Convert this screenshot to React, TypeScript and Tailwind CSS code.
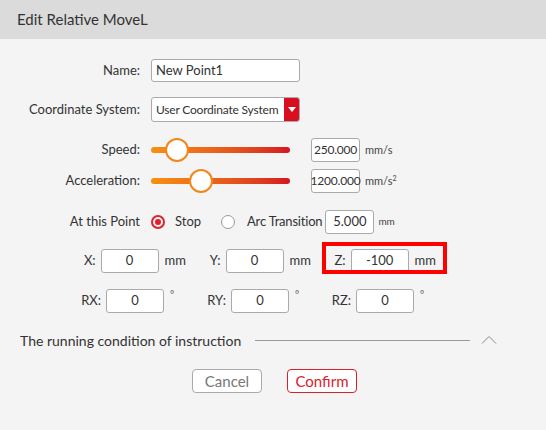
import React from "react";

const font = { fontFamily: "Lato, 'Noto Sans', sans-serif" };

function Label({ children }: { children: React.ReactNode }) {
  return <div className="w-[140px] shrink-0 text-right text-[13px] text-[#333]">{children}</div>;
}

function Slider({ pos }: { pos: number }) {
  return (
    <div className="relative ml-[11px] h-[24px] w-[139px] flex items-center">
      <div className="h-[6px] w-full rounded-full bg-gradient-to-r from-[#f7900f] to-[#d6121f]" />
      <div
        className="absolute top-0 h-[24px] w-[24px] rounded-full border-2 border-[#f3861a] bg-white"
        style={{ left: pos - 12 }}
      />
    </div>
  );
}

function NumBox({ value, w = "w-[49px]", big }: { value: string; w?: string; big?: boolean }) {
  return (
    <div
      className={`${w} h-[24px] shrink-0 flex items-center justify-center rounded-[3px] border border-[#aaaaaa] bg-white ${
        big ? "text-[13px]" : "text-[12px] tracking-[-0.2px]"
      } text-[#333] whitespace-nowrap`}
    >
      {value}
    </div>
  );
}

function Axis({ label, value, unit, deg }: { label: string; value: string; unit: string; deg?: boolean }) {
  return (
    <div className="w-[125px] shrink-0 flex items-center">
      <div className="w-[40px] text-right text-[13px] text-[#333]">{label}</div>
      <div className="ml-[5px]">
        <NumBox value={value} w="w-[58px]" big />
      </div>
      {deg ? (
        <span className="ml-[6px] self-start -mt-[2px] text-[10px] text-[#555]">°</span>
      ) : (
        <span className="ml-[6px] text-[13px] text-[#333]">{unit}</span>
      )}
    </div>
  );
}

export default function App() {
  return (
    <div className="w-[546px] h-[430px] bg-[#f4f4f4] relative overflow-hidden" style={font}>
      <div className="h-[39px] bg-[#dbdbdb] flex items-center pl-[17px] text-[15px] text-[#333]">
        Edit Relative MoveL
      </div>

      <div className="flex flex-col">
        <div className="mt-[20px] flex items-center h-[23px]">
          <Label>Name:</Label>
          <div className="ml-[11px] w-[149px] h-[23px] flex items-center rounded-[3px] border border-[#aaaaaa] bg-white pl-[4px] text-[13px] text-[#333]">
            New Point1
          </div>
        </div>

        <div className="mt-[15px] flex items-center h-[25px]">
          <Label>Coordinate System:</Label>
          <div className="ml-[11px] w-[149px] h-[25px] flex items-center rounded-[3px] border border-[#aaaaaa] bg-white text-[12px] text-[#333] overflow-hidden">
            <span className="flex-1 pl-[4px] whitespace-nowrap tracking-[-0.2px]">User Coordinate System</span>
            <div className="w-[15px] h-full shrink-0 bg-[#d90f1f] flex items-center justify-center">
              <svg width="8" height="6" viewBox="0 0 8 6">
                <path d="M0 0 L8 0 L4 5 Z" fill="#fff" />
              </svg>
            </div>
          </div>
        </div>

        <div className="mt-[16px] flex items-center h-[24px]">
          <Label>Speed:</Label>
          <Slider pos={26} />
          <div className="ml-[21px]">
            <NumBox value="250.000" />
          </div>
          <span className="ml-[5px] text-[11px] text-[#444]">mm/s</span>
        </div>

        <div className="mt-[7px] flex items-center h-[24px]">
          <Label>Acceleration:</Label>
          <Slider pos={50} />
          <div className="ml-[21px]">
            <NumBox value="1200.000" />
          </div>
          <span className="ml-[5px] text-[11px] text-[#444]">
            mm/s<sup className="text-[7px]">2</sup>
          </span>
        </div>

        <div className="mt-[16px] flex items-center h-[25px]">
          <Label>At this Point</Label>
          <div className="ml-[11px] w-[14px] h-[14px] rounded-full border-2 border-[#e0202c] flex items-center justify-center">
            <div className="w-[6px] h-[6px] rounded-full bg-[#e0202c]" />
          </div>
          <span className="ml-[10px] text-[13px] text-[#333]">Stop</span>
          <div className="ml-[20px] w-[14px] h-[14px] rounded-full border-[1.5px] border-[#9a9a9a] bg-white" />
          <span className="ml-[12px] text-[13px] text-[#333] tracking-[-0.2px]">Arc Transition</span>
          <div className="ml-[3px]">
            <NumBox value="5.000" big />
          </div>
          <span className="ml-[4px] text-[10px] text-[#444]">mm</span>
        </div>

        <div className="mt-[15px] flex items-center h-[24px] pl-[61px]">
          <Axis label="X:" value="0" unit="mm" />
          <Axis label="Y:" value="0" unit="mm" />
          <Axis label="Z:" value="-100" unit="mm" />
        </div>

        <div className="mt-[16px] flex items-center h-[24px] pl-[61px]">
          <Axis label="RX:" value="0" unit="" deg />
          <Axis label="RY:" value="0" unit="" deg />
          <Axis label="RZ:" value="0" unit="" deg />
        </div>

        <div className="mt-[17px] flex items-center h-[20px] pl-[20px]">
          <span className="w-[224px] shrink-0 text-[14px] text-[#333] whitespace-nowrap">
            The running condition of instruction
          </span>
          <div className="ml-[11px] w-[215px] h-px bg-[#999]" />
          <svg className="ml-[11px]" width="16" height="10" viewBox="0 0 16 10">
            <path d="M1 8.5 L8 1.5 L15 8.5" fill="none" stroke="#8a8a8a" strokeWidth="1" />
          </svg>
        </div>

        <div className="mt-[19px] flex items-center pl-[192px] gap-[25px]">
          <button className="w-[70px] h-[24px] rounded-[4px] border border-[#aaaaaa] bg-white text-[15px] text-[#777]">
            Cancel
          </button>
          <button className="w-[70px] h-[24px] rounded-[4px] border border-[#d9202c] bg-white text-[15px] text-[#d9202c]">
            Confirm
          </button>
        </div>
      </div>

      <div className="absolute left-[322px] top-[242px] w-[125px] h-[32px] border-4 border-[#ff0000] pointer-events-none" />
    </div>
  );
}
